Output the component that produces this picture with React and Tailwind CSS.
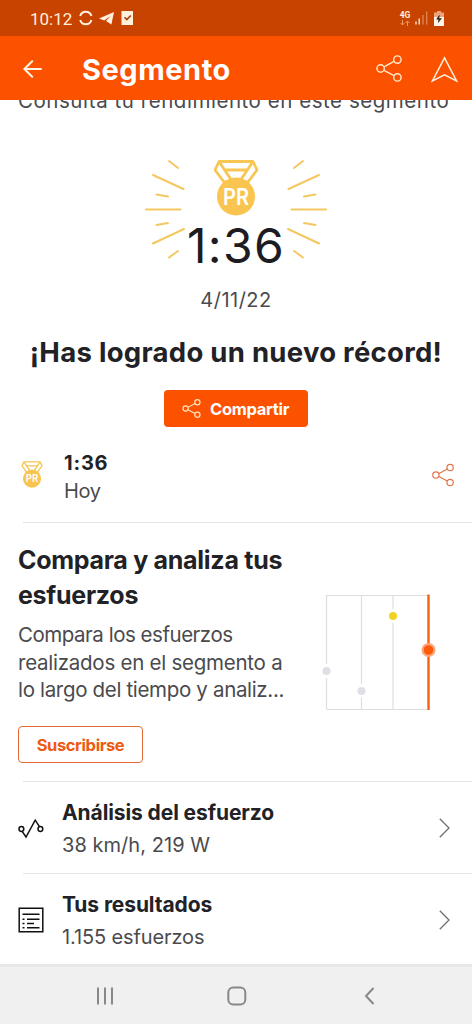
import React from "react";

const rays = [
  [169, 161, 178, 168],
  [153, 175, 183.5, 189],
  [156.5, 194.5, 168, 196.5],
  [146, 209.5, 180.5, 209.5],
  [156.5, 225, 168, 223],
  [153, 243.5, 184, 229],
  [169, 257.5, 178, 251],
];

const rows = [
  { key: "analysis", title: "Análisis del esfuerzo", sub: "38 km/h, 219 W", Icon: AnalysisIcon, titleCls: "tracking-[-0.1px]", subCls: "tracking-[0.05px]" },
  { key: "results", title: "Tus resultados", sub: "1.155 esfuerzos", Icon: ResultsIcon, titleCls: "tracking-[-0.1px]", subCls: "tracking-[-0.12px]" },
];

function ShareIcon({ className, strokeWidth = 1.4 }) {
  return (
    <svg viewBox="0 0 26 27" fill="none" stroke="currentColor" strokeWidth={strokeWidth} className={className}>
      <circle cx="4.6" cy="13.5" r="3.7" />
      <circle cx="21.4" cy="4.6" r="3.7" />
      <circle cx="21.4" cy="22.4" r="3.7" />
      <path d="M8 11.9 18 6.4M8 15.3l10 5.3" />
    </svg>
  );
}

function Medal({ className }) {
  return (
    <svg viewBox="0 0 46 56" className={className}>
      <g fill="none" stroke="#f7c653" strokeWidth="2.8" strokeLinejoin="round">
        <path d="M6 1.5h34l4 8.5-9 12H11L2 10z" />
        <path d="M6 1.5l12 18M40 1.5l-12 18M11 10h24" />
      </g>
      <circle cx="23" cy="36.5" r="19" fill="#f9c550" />
      <text x="23" y="44.5" textAnchor="middle" fontSize="22.5" fontWeight="600" fill="#fff" textLength="26" lengthAdjust="spacingAndGlyphs">
        PR
      </text>
    </svg>
  );
}

function AnalysisIcon() {
  return (
    <svg viewBox="0 0 26 26" fill="none" stroke="#111" strokeWidth="1.5" className="h-[26px] w-[26px]">
      <circle cx="3.4" cy="14" r="2.4" />
      <circle cx="22.4" cy="14" r="2.4" />
      <path d="M4.2 16.4 8 22 17.2 5.2l4.3 6.5" />
    </svg>
  );
}

function ResultsIcon() {
  return (
    <svg viewBox="0 0 26 26" fill="none" stroke="#111" strokeWidth="1.5" className="h-[26px] w-[26px]">
      <path d="M1.2 1.2h23.6v23.6H1.2zM4.5 7.2h17M9 12.2h12.5M9 16.4h7M9 20.7h12.5M4.5 12.2h2M4.5 16.4h2M4.5 20.7h2" />
    </svg>
  );
}

function StatusBar() {
  return (
    <div className="flex h-9 shrink-0 items-center bg-[#c94300] pl-[30px] pr-[28px] text-[#fff0dc]">
      <span className="w-[42px] whitespace-nowrap pt-px font-[Roboto] text-[17px] leading-5">10:12</span>
      <svg viewBox="0 0 56 16" fill="none" className="ml-[6px] h-4 w-14">
        <path d="M2.2 6A5.8 5.8 0 0 1 13.4 6M2.2 10a5.8 5.8 0 0 0 11.2 0" stroke="currentColor" strokeWidth="2" />
        <path d="M21 8.6 36 2l-2.6 12.5-5.4-3.4 4.5-5-6.3 4.3z" fill="currentColor" />
        <path d="M43.5 1H55v14H43.5z" fill="currentColor" />
        <path d="m46.5 7.2 2.3 2.3 4-4" stroke="#a43b08" strokeWidth="1.6" />
      </svg>
      <div className="ml-auto flex items-center">
        <div className="flex w-3 flex-col items-center">
          <span className="font-[Roboto] text-[8.5px] font-bold leading-[9px]">4G</span>
          <svg viewBox="0 0 10 6" fill="none" stroke="#ee9a68" className="h-[6px] w-[10px]">
            <path d="M2.5 0v5M.5 3l2 2 2-2M7.5 6V1M5.5 3l2-2 2 2" />
          </svg>
        </div>
        <svg viewBox="0 0 13 14" fill="none" strokeWidth="1.3" className="ml-[4px] mr-px h-[14px] w-[13px]">
          <path d="M1 13.5v-3M4.2 13.5v-6" stroke="#fff0dc" />
          <path d="M8 13.5v-9.5M11.7 13.5v-13" stroke="#e08556" />
        </svg>
        <svg viewBox="0 0 10 15" className="ml-[5px] h-[15px] w-[10px]">
          <path d="M3 0h4v1.6h3V7H0V1.6h3z" fill="#eda47d" />
          <path d="M0 6h10v9H0z" fill="#fff5e8" />
          <path d="M5.7 3.5 2 8.5h2.5l-.7 3.8L8 7.3H5.3z" fill="#30251c" />
        </svg>
      </div>
    </div>
  );
}

function AppBar() {
  return (
    <header className="flex h-16 shrink-0 items-center bg-[#fc5200] pl-[23px] pr-[14px] text-white">
      <svg viewBox="0 0 19 18" fill="none" stroke="#fff5e4" strokeWidth="2" strokeLinecap="round" className="mt-px h-[18px] w-[19px]">
        <path d="M18 9H1.5M9.2 1.2 1.4 9l7.8 7.8" />
      </svg>
      <h1 className="ml-[40px] whitespace-nowrap pt-[3px] text-[29px] font-bold leading-9 tracking-[0.55px]">Segmento</h1>
      <ShareIcon className="ml-auto h-[27px] w-[26px] text-[#ffe9c9]" />
      <svg viewBox="0 0 27 27" fill="none" stroke="#fff0dc" strokeWidth="1.5" className="ml-[29px] mt-[2px] h-[27px] w-[27px]">
        <path d="M13.5 1.8 25.6 25l-12.1-6.2L1.4 25z" />
      </svg>
    </header>
  );
}

function Hero() {
  return (
    <section className="flex flex-col items-center">
      <div className="mt-[43px] grid h-[108px] w-[182px] justify-items-center">
        <svg viewBox="145 158 182 108" fill="none" stroke="#f3c860" strokeWidth="2" strokeLinecap="round" className="col-start-1 row-start-1 h-[108px] w-[182px]">
          {rays.map(([x1, y1, x2, y2]) => (
            <g key={y1}>
              <line x1={x1} y1={y1} x2={x2} y2={y2} />
              <line x1={472 - x1} y1={y1} x2={472 - x2} y2={y2} />
            </g>
          ))}
        </svg>
        <Medal className="col-start-1 row-start-1 mt-[2px] h-[56px] w-[46px]" />
        <span className="col-start-1 row-start-1 self-end whitespace-nowrap text-[48px] font-normal leading-10 tracking-[1.3px] text-[#1c1c22]">1:36</span>
      </div>
      <span className="mt-[20px] text-[20px] leading-7 tracking-[0.5px] text-[#4a4a4e]">4/11/22</span>
      <h2 className="mt-[20px] whitespace-nowrap text-[27.5px] font-bold leading-9 tracking-[0.28px] text-[#222226]">¡Has logrado un nuevo récord!</h2>
      <button className="mt-5 flex h-[37px] w-36 items-center rounded bg-[#fc5200] pl-[18px] text-white">
        <ShareIcon className="h-[19px] w-[19px] text-[#ffe9c9]" strokeWidth={1.6} />
        <span className="ml-[9px] whitespace-nowrap pt-[2px] text-[16.5px] font-bold tracking-[-0.3px]">Compartir</span>
      </button>
    </section>
  );
}

function CompareChart() {
  return (
    <svg viewBox="321 592 120 120" fill="none" className="ml-auto mt-[69px] h-[120px] w-[120px]">
      <path d="M326.5 595.5H428M326.5 709.5H428M326.5 595v114M361.5 595v114M393 595v114" stroke="#dedee2" strokeWidth="1.2" />
      <path d="M428.5 594.5v115.5" stroke="#f26210" strokeWidth="2.4" />
      <g stroke="#fff" strokeWidth="3">
        <circle cx="326.5" cy="671" r="5.5" fill="#dfdfe6" />
        <circle cx="361.5" cy="691" r="5.5" fill="#dfdfe6" />
        <circle cx="393" cy="616" r="5.5" fill="#f2d420" />
      </g>
      <circle cx="428.5" cy="650" r="7" fill="#ffa57c" />
      <circle cx="428.5" cy="650" r="4.8" fill="#fb5c0a" />
    </svg>
  );
}

export default function App() {
  return (
    <div className="flex h-[1024px] w-[472px] flex-col overflow-hidden bg-white font-[Inter,sans-serif] text-[#222226]">
      <StatusBar />
      <AppBar />

      <main className="flex-1 overflow-hidden">
        {/* Scrolled partly under the app bar */}
        <p className="-mt-[13px] whitespace-nowrap pl-[18px] text-[20.5px] leading-7 tracking-[0.54px] text-[#4a4a4e]">Consulta tu rendimiento en este segmento</p>
        <Hero />

        {/* Latest effort */}
        <div className="flex h-[95px] items-start pl-[21px] pr-[18px] pt-[21px]">
          <Medal className="mt-[12px] h-[29px] w-[22px]" />
          <div className="ml-[21px]">
            <p className="pt-px text-[20px] font-bold leading-7 tracking-[0.8px]">1:36</p>
            <p className="text-[20px] leading-7 tracking-[-0.3px] text-[#4a4a4e]">Hoy</p>
          </div>
          <ShareIcon className="ml-auto mt-[15px] h-[24px] w-[22px] text-[#e0764d]" />
        </div>
        <hr className="ml-[23px] border-[#e4e4e4]" />

        {/* Compare upsell */}
        <section className="flex h-[258px] pl-[18px] pr-[31px]">
          <div className="pt-[20px]">
            <h3 className="whitespace-nowrap text-[25px] font-bold leading-[34.5px] tracking-[-0.28px]">
              Compara y analiza tus
              <br />
              esfuerzos
            </h3>
            <p className="mt-[9px] whitespace-nowrap text-[20.5px] leading-[27.6px] tracking-[-0.33px] text-[#4a4a4e]">
              <span className="tracking-[-0.48px]">Compara los esfuerzos</span>
              <br />
              <span className="tracking-[-0.25px]">realizados en el segmento a</span>
              <br />
              lo largo del tiempo y analiz...
            </p>
            <button className="mt-[22px] flex h-[37px] w-[125px] items-center justify-center rounded border-[1.5px] border-[#e26a35] pt-[2px] text-[16.5px] font-bold tracking-[-0.4px] text-[#ed5a14]">
              Suscribirse
            </button>
          </div>
          <CompareChart />
        </section>

        {rows.map(({ key, title, sub, Icon, titleCls, subCls }) => (
          <div key={key}>
            <hr className="ml-[23px] border-[#e4e4e4]" />
            <div className="flex h-[91px] items-center pl-[18px] pr-[22px]">
              <Icon />
              <div className="ml-[18px] whitespace-nowrap pt-[3px]">
                <p className={`text-[21px] font-bold leading-8 ${titleCls}`}>{title}</p>
                <p className={`text-[20px] leading-8 text-[#4a4a4e] ${subCls}`}>{sub}</p>
              </div>
              <svg viewBox="0 0 11 20" fill="none" stroke="#6f6f73" strokeWidth="1.3" className="ml-auto h-5 w-[11px]">
                <path d="M.8.8 10 10 .8 19.2" />
              </svg>
            </div>
          </div>
        ))}
      </main>

      <nav className="flex h-[60px] shrink-0 items-center border-t-[3px] border-[#e8e8e8] bg-[#f0f0f0] pl-[96px]">
        <svg viewBox="0 0 280 20" fill="none" stroke="#88888a" strokeWidth="2" className="h-5 w-[280px]">
          <path d="M2 1.5v17M9 1.5v17M16 1.5v17" />
          <rect x="132.3" y="1.5" width="17" height="17" rx="5" />
          <path d="M277.5 2 270 10l7.5 8" />
        </svg>
      </nav>
    </div>
  );
}
